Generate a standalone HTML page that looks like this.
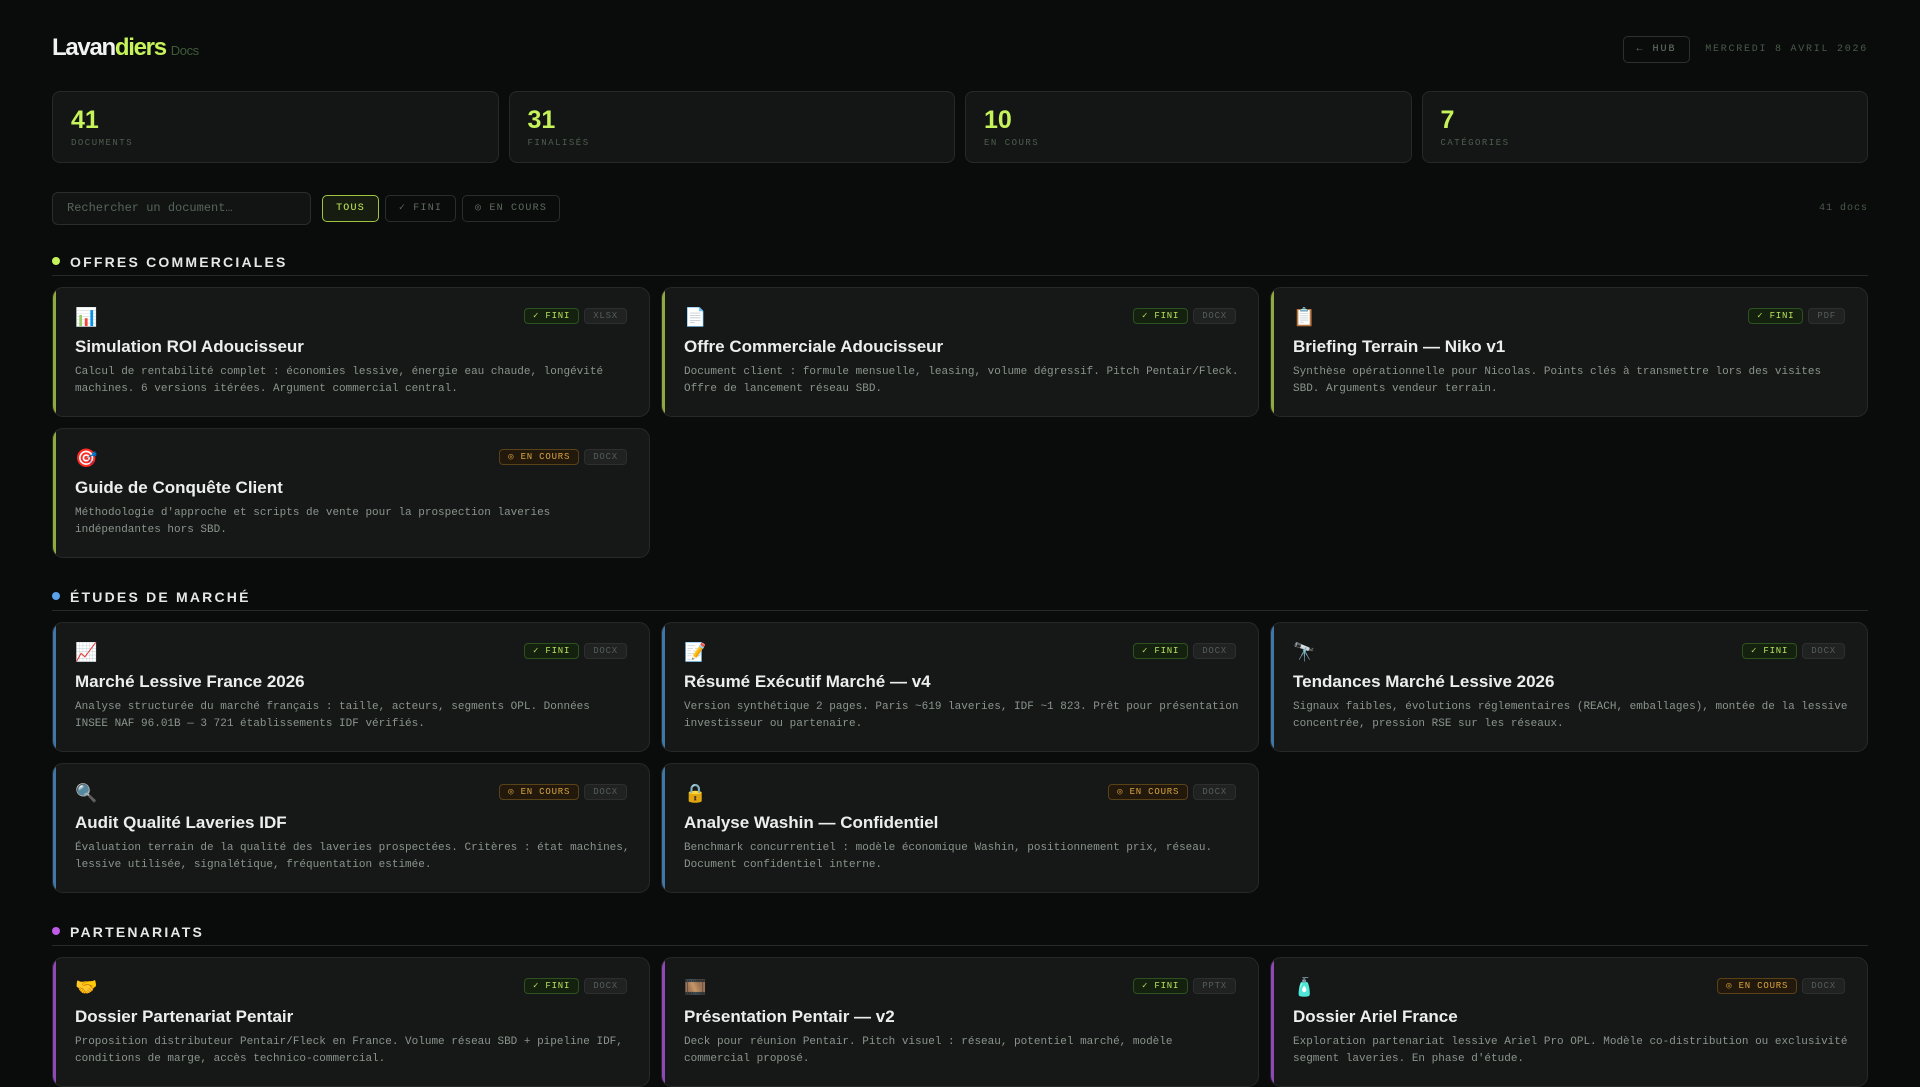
<!DOCTYPE html>
<html><head><meta charset="utf-8">
<style>
*{box-sizing:border-box;margin:0;padding:0}
html,body{width:1920px;height:1080px;overflow:hidden;background:#0a0c0b;color:#e8e8e8;font-family:"Liberation Sans",sans-serif}
.wrap{position:absolute;left:52px;top:0;width:1816px}
.mono{font-family:"Liberation Mono","DejaVu Sans Mono",monospace}
.hdr{position:absolute;top:30px;left:0;width:1816px;height:36px}
.logo{position:absolute;left:0;top:4px;font-size:24px;font-weight:bold;letter-spacing:-1.3px;color:#f2f2f2}
.logo .g{color:#c6f25a}
.logo .d{font-size:13px;font-weight:normal;color:#3e5a3a;letter-spacing:-0.4px;margin-left:5px}
.hub{position:absolute;right:178px;top:6px;height:27px;width:67px;border:1px solid #2c302e;border-radius:5px;font-size:10px;letter-spacing:2px;color:#6a776a;text-align:center;line-height:25px}
.date{position:absolute;right:0;top:14px;font-size:10px;letter-spacing:1.75px;color:#4a5a4a}
.stats{position:absolute;top:91px;left:0;width:1816px;display:grid;grid-template-columns:repeat(4,1fr);gap:10px}
.stat{height:72px;background:#141615;border:1px solid #262927;border-radius:8px;padding:14px 18px}
.stat .n{font-size:25px;font-weight:bold;color:#c6f25a;line-height:28px}
.stat .l{font-size:9px;letter-spacing:1.5px;color:#4f5d4f;margin-top:4px}
.tools{position:absolute;top:192px;left:0;width:1816px;height:33px}
.search{position:absolute;left:0;top:0;width:259px;height:33px;background:#121413;border:1px solid #2a2d2b;border-radius:6px;font-size:12px;color:#56655a;padding-left:14px;line-height:31px}
.btn{position:absolute;top:3px;height:27px;border:1px solid #2a2d2b;border-radius:5px;font-size:10px;letter-spacing:1.2px;color:#5f6b5f;text-align:center;line-height:25px}
.btn.on{border-color:#9fc443;background:#161c0f;color:#c6f25a}
.cnt{position:absolute;right:0;top:11px;font-size:10px;letter-spacing:1px;color:#4a5a4a}
.sec{position:absolute;left:0;width:1816px}
.sh{height:26px;border-bottom:1px solid #262927;position:relative}
.sh .dot{position:absolute;left:0;top:7px;width:8px;height:8px;border-radius:50%}
.sh .t{position:absolute;left:18px;top:4px;font-size:14px;font-weight:bold;letter-spacing:2.2px;color:#e6e6e6}
.grid{margin-top:11px;display:grid;grid-template-columns:repeat(3,598px);gap:11px 11px;grid-auto-rows:130px}
.card{background:#161817;border:1px solid #262927;border-radius:11px;padding:18px 16px 0 22px;position:relative;overflow:hidden}
.card::before{content:"";position:absolute;left:0;top:0;bottom:0;width:3px}
.g1 .card::before{background:#8faa3e}
.g2 .card::before{background:#3f78a8}
.g3 .card::before{background:#9048b8}
.top{height:24px;position:relative}
.ico{font-size:18px;line-height:24px;font-family:"Noto Color Emoji","DejaVu Sans",sans-serif}
.badges{position:absolute;right:6px;top:2px;display:flex;gap:5px}
.b{height:16px;line-height:14px;font-size:9px;padding:0 8px;border-radius:4px;border:1px solid;letter-spacing:0.8px}
.b.f{border-color:#2d5220;background:#15210f;color:#b5e05a}
.b.c{border-color:#5a4218;background:#22190c;color:#d9a440}
.b.x{border-color:#2c2f2e;background:#1f2221;color:#555d58}
.ttl{margin-top:6px;font-size:17px;font-weight:bold;line-height:22px;color:#ededed}
.desc{margin-top:6px;font-size:11px;line-height:17px;color:#8a948c;white-space:nowrap;margin-right:-20px}
</style></head><body>
<div class="wrap">
<div class="hdr">
<div class="logo">Lavan<span class="g">diers</span><span class="d">Docs</span></div>
<div class="hub mono">← HUB</div>
<div class="date mono">MERCREDI 8 AVRIL 2026</div>
</div>
<div class="stats">
<div class="stat"><div class="n">41</div><div class="l mono">DOCUMENTS</div></div>
<div class="stat"><div class="n">31</div><div class="l mono">FINALISÉS</div></div>
<div class="stat"><div class="n">10</div><div class="l mono">EN COURS</div></div>
<div class="stat"><div class="n">7</div><div class="l mono">CATÉGORIES</div></div>
</div>
<div class="tools">
<div class="search mono">Rechercher un document…</div>
<div class="btn on mono" style="left:270px;width:57px">TOUS</div>
<div class="btn mono" style="left:333px;width:71px">✓ FINI</div>
<div class="btn mono" style="left:410px;width:98px">◎ EN COURS</div>
<div class="cnt mono">41 docs</div>
</div>

<div class="sec g1" style="top:250px">
<div class="sh"><span class="dot" style="background:#c6f25a"></span><span class="t">OFFRES COMMERCIALES</span></div>
<div class="grid">
<div class="card"><div class="top"><span class="ico">📊</span><div class="badges mono"><span class="b f">✓ FINI</span><span class="b x">XLSX</span></div></div><div class="ttl">Simulation ROI Adoucisseur</div><div class="desc mono">Calcul de rentabilité complet : économies lessive, énergie eau chaude, longévité<br>machines. 6 versions itérées. Argument commercial central.</div></div>
<div class="card"><div class="top"><span class="ico">📄</span><div class="badges mono"><span class="b f">✓ FINI</span><span class="b x">DOCX</span></div></div><div class="ttl">Offre Commerciale Adoucisseur</div><div class="desc mono">Document client : formule mensuelle, leasing, volume dégressif. Pitch Pentair/Fleck.<br>Offre de lancement réseau SBD.</div></div>
<div class="card"><div class="top"><span class="ico">📋</span><div class="badges mono"><span class="b f">✓ FINI</span><span class="b x">PDF</span></div></div><div class="ttl">Briefing Terrain — Niko v1</div><div class="desc mono">Synthèse opérationnelle pour Nicolas. Points clés à transmettre lors des visites<br>SBD. Arguments vendeur terrain.</div></div>
<div class="card"><div class="top"><span class="ico">🎯</span><div class="badges mono"><span class="b c">◎ EN COURS</span><span class="b x">DOCX</span></div></div><div class="ttl">Guide de Conquête Client</div><div class="desc mono">Méthodologie d'approche et scripts de vente pour la prospection laveries<br>indépendantes hors SBD.</div></div>
</div></div>

<div class="sec g2" style="top:585px">
<div class="sh"><span class="dot" style="background:#5aa2ea"></span><span class="t">ÉTUDES DE MARCHÉ</span></div>
<div class="grid">
<div class="card"><div class="top"><span class="ico">📈</span><div class="badges mono"><span class="b f">✓ FINI</span><span class="b x">DOCX</span></div></div><div class="ttl">Marché Lessive France 2026</div><div class="desc mono">Analyse structurée du marché français : taille, acteurs, segments OPL. Données<br>INSEE NAF 96.01B — 3 721 établissements IDF vérifiés.</div></div>
<div class="card"><div class="top"><span class="ico">📝</span><div class="badges mono"><span class="b f">✓ FINI</span><span class="b x">DOCX</span></div></div><div class="ttl">Résumé Exécutif Marché — v4</div><div class="desc mono">Version synthétique 2 pages. Paris ~619 laveries, IDF ~1 823. Prêt pour présentation<br>investisseur ou partenaire.</div></div>
<div class="card"><div class="top"><span class="ico">🔭</span><div class="badges mono"><span class="b f">✓ FINI</span><span class="b x">DOCX</span></div></div><div class="ttl">Tendances Marché Lessive 2026</div><div class="desc mono">Signaux faibles, évolutions réglementaires (REACH, emballages), montée de la lessive<br>concentrée, pression RSE sur les réseaux.</div></div>
<div class="card"><div class="top"><span class="ico">🔍</span><div class="badges mono"><span class="b c">◎ EN COURS</span><span class="b x">DOCX</span></div></div><div class="ttl">Audit Qualité Laveries IDF</div><div class="desc mono">Évaluation terrain de la qualité des laveries prospectées. Critères : état machines,<br>lessive utilisée, signalétique, fréquentation estimée.</div></div>
<div class="card"><div class="top"><span class="ico">🔒</span><div class="badges mono"><span class="b c">◎ EN COURS</span><span class="b x">DOCX</span></div></div><div class="ttl">Analyse Washin — Confidentiel</div><div class="desc mono">Benchmark concurrentiel : modèle économique Washin, positionnement prix, réseau.<br>Document confidentiel interne.</div></div>
</div></div>

<div class="sec g3" style="top:920px">
<div class="sh"><span class="dot" style="background:#c05ae8"></span><span class="t">PARTENARIATS</span></div>
<div class="grid">
<div class="card"><div class="top"><span class="ico">🤝</span><div class="badges mono"><span class="b f">✓ FINI</span><span class="b x">DOCX</span></div></div><div class="ttl">Dossier Partenariat Pentair</div><div class="desc mono">Proposition distributeur Pentair/Fleck en France. Volume réseau SBD + pipeline IDF,<br>conditions de marge, accès technico-commercial.</div></div>
<div class="card"><div class="top"><span class="ico">🎞️</span><div class="badges mono"><span class="b f">✓ FINI</span><span class="b x">PPTX</span></div></div><div class="ttl">Présentation Pentair — v2</div><div class="desc mono">Deck pour réunion Pentair. Pitch visuel : réseau, potentiel marché, modèle<br>commercial proposé.</div></div>
<div class="card"><div class="top"><span class="ico">🧴</span><div class="badges mono"><span class="b c">◎ EN COURS</span><span class="b x">DOCX</span></div></div><div class="ttl">Dossier Ariel France</div><div class="desc mono">Exploration partenariat lessive Ariel Pro OPL. Modèle co-distribution ou exclusivité<br>segment laveries. En phase d'étude.</div></div>
</div></div>
</div>
</body></html>
